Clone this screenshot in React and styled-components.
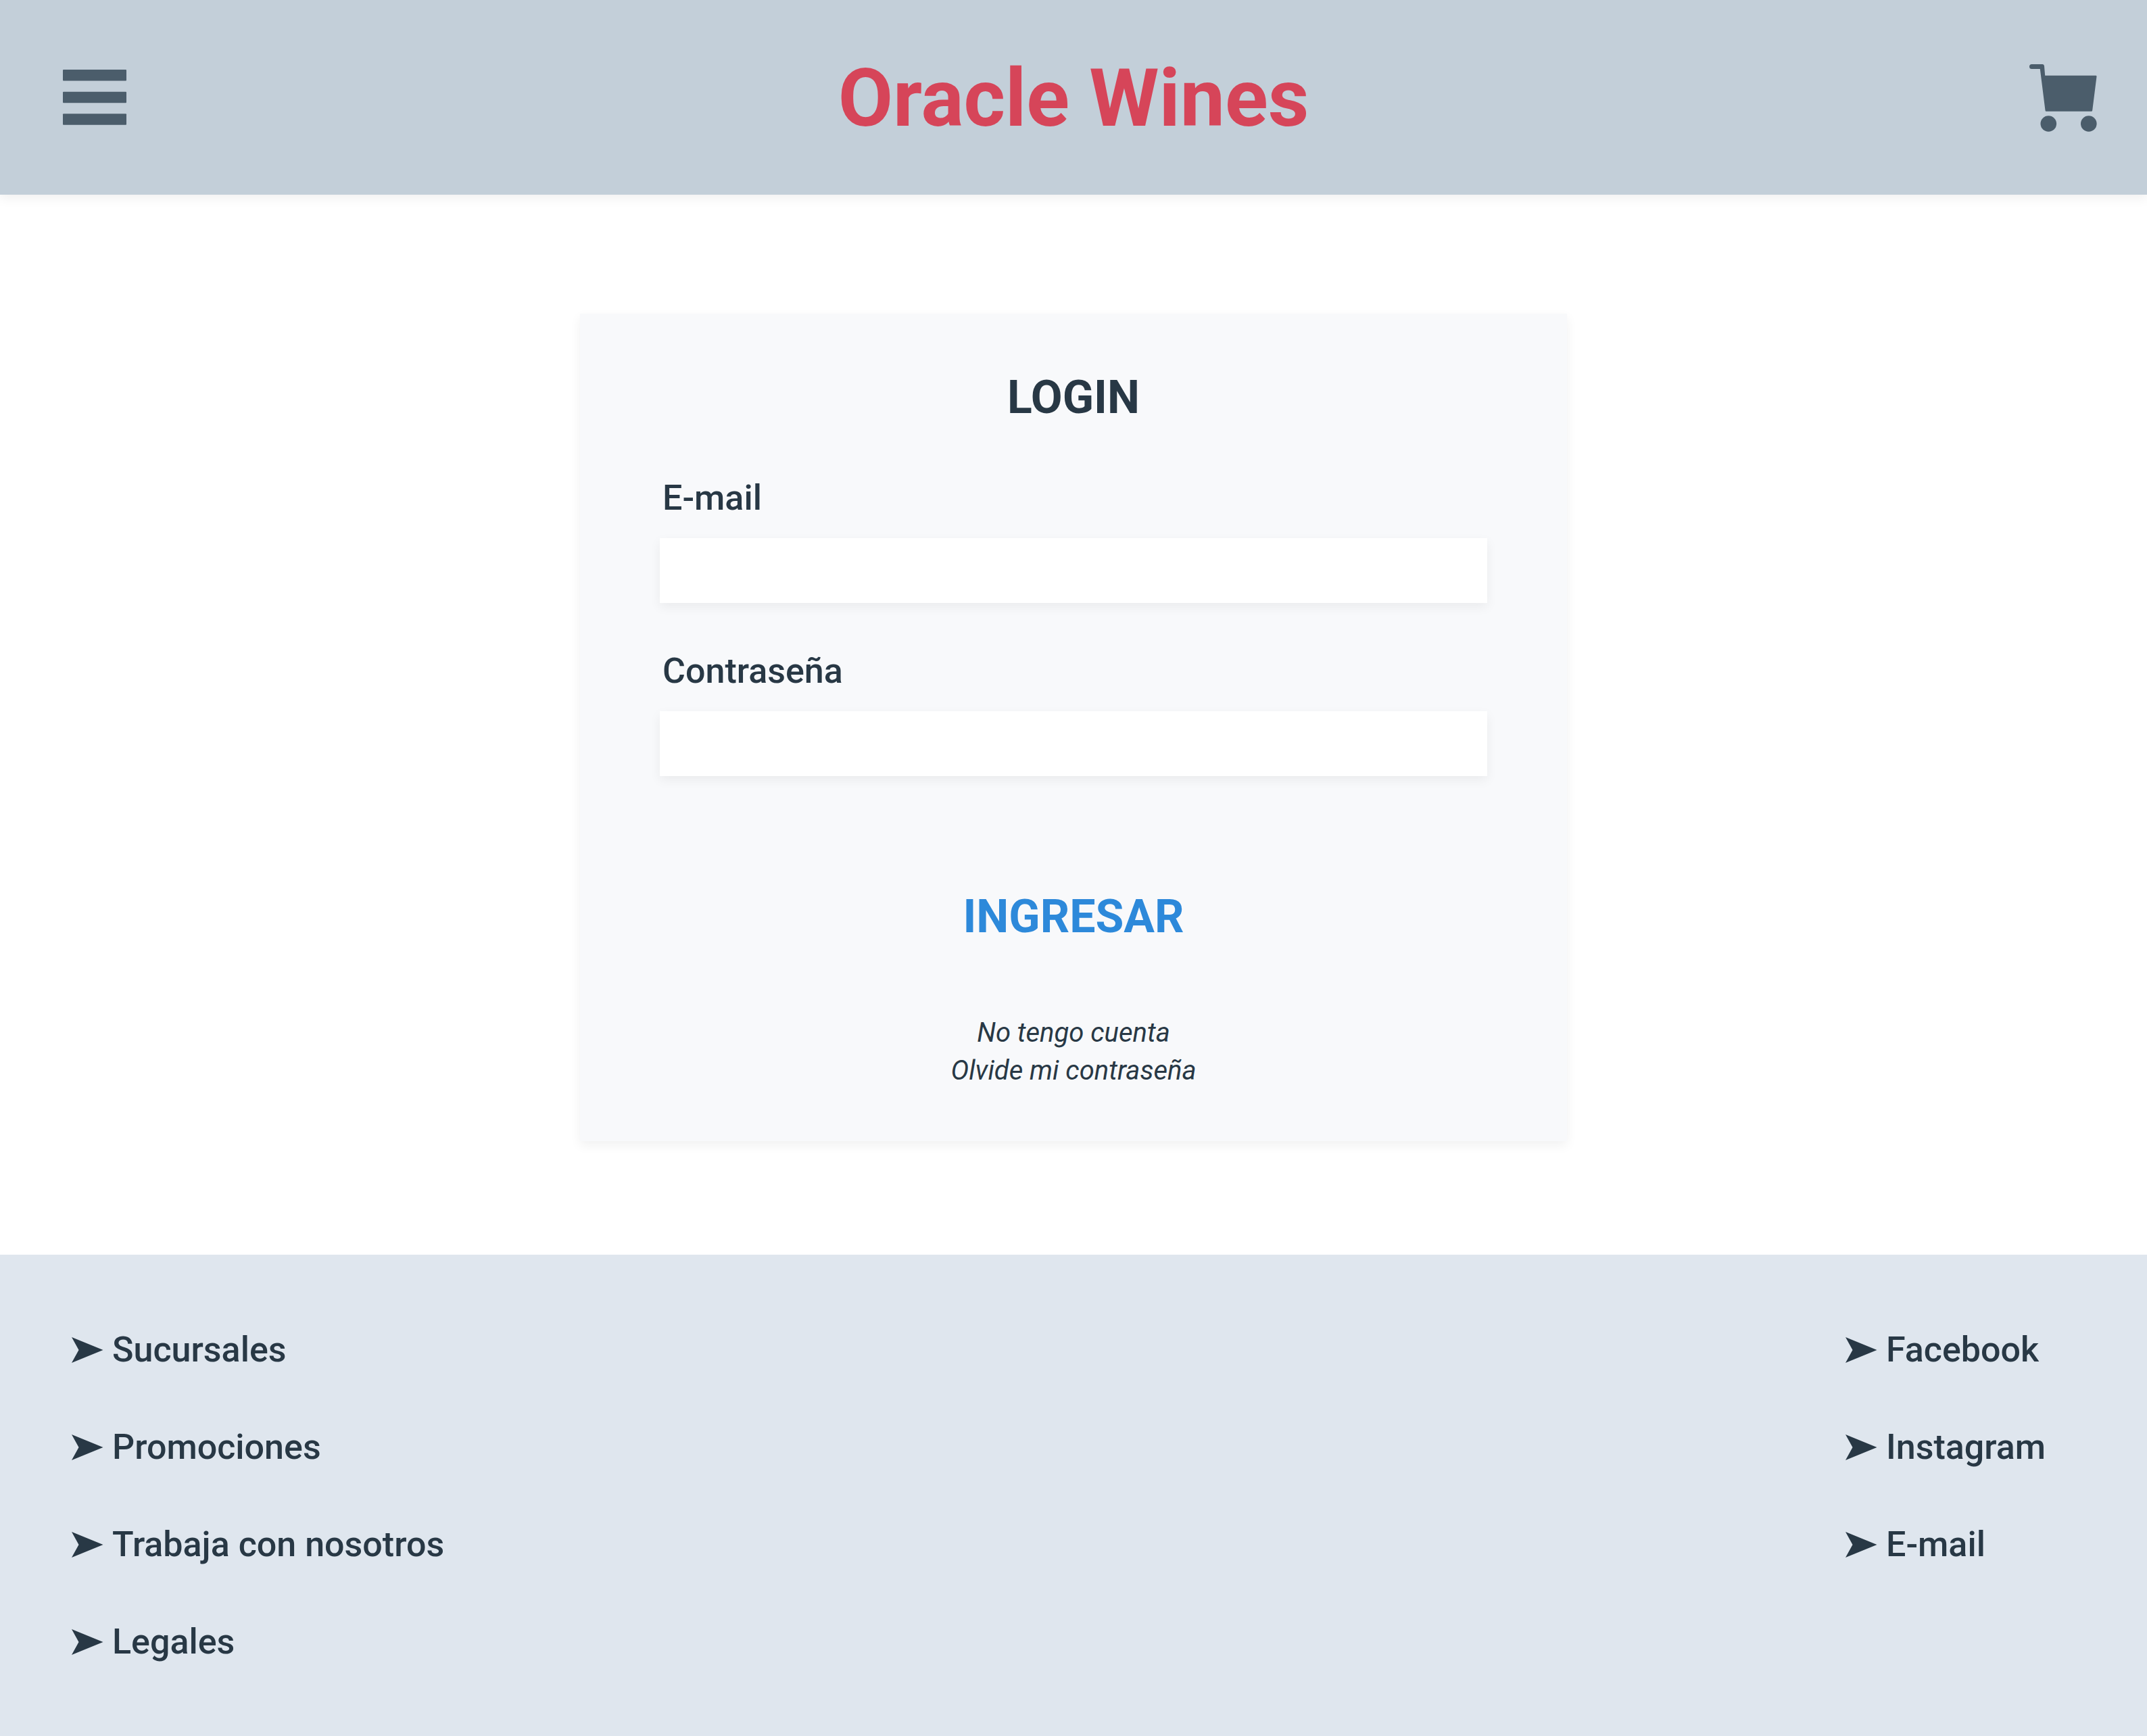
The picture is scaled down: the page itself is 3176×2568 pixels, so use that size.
import React from "react";
import styled, { createGlobalStyle } from "styled-components";

const color = {
  bar: "#c3cfd9",
  brand: "#d64559",
  icon: "#4b5d6b",
  text: "#283845",
  action: "#2d89da",
  card: "#f8f9fb",
  footer: "#dfe6ee",
};

const shadow = "0 6px 16px rgba(0, 0, 0, 0.06)";

const GlobalStyle = createGlobalStyle`
  *, *::before, *::after { box-sizing: border-box; }
  body {
    margin: 0;
    background: #fff;
    color: ${color.text};
    font-family: Roboto, "Liberation Sans", sans-serif;
    font-size: 52px;
    font-weight: 500;
    line-height: 66px;
  }
`;

const Page = styled.div`
  display: flex;
  flex-direction: column;
  min-height: 100vh;
`;

const Header = styled.header`
  display: grid;
  grid-template-columns: 1fr auto 1fr;
  align-items: center;
  height: 288px;
  background: ${color.bar};
  box-shadow: ${shadow};
`;

const IconButton = styled.button`
  display: flex;
  justify-self: ${({ $side }) => $side};
  margin: 0 74px 0 92px;
  padding: 0;
  border: 0;
  background: none;
  color: ${color.icon};
  cursor: pointer;
`;

const Brand = styled.h1`
  margin: 0;
  padding-top: 4px;
  color: ${color.brand};
  font-size: 118px;
  font-weight: 700;
  line-height: 136px;
`;

const Main = styled.main`
  display: flex;
  flex: 1;
  justify-content: center;
  align-items: flex-start;
  padding: 176px 40px 168px;
`;

const Card = styled.form`
  display: flex;
  flex-direction: column;
  width: 100%;
  max-width: 1460px;
  padding: 82px 118px 76px;
  background: ${color.card};
  box-shadow: ${shadow};
`;

const CardTitle = styled.h2`
  margin: 0 0 74px;
  font-size: 68px;
  font-weight: 700;
  line-height: 84px;
  text-align: center;
`;

const Fields = styled.div`
  display: flex;
  flex-direction: column;
  gap: 68px;
`;

const Field = styled.div`
  display: flex;
  flex-direction: column;
  gap: 26px;
`;

const Label = styled.label`
  padding-left: 4px;
`;

const TextBox = styled.input`
  width: 100%;
  height: 96px;
  padding: 0 24px;
  border: 0;
  border-radius: 0;
  background: #fff;
  box-shadow: ${shadow};
  color: inherit;
  font: inherit;
`;

const Submit = styled.button`
  align-self: center;
  margin: 166px 0 102px;
  padding: 0;
  border: 0;
  background: none;
  color: ${color.action};
  font-family: inherit;
  font-size: 68px;
  font-weight: 700;
  line-height: 84px;
  cursor: pointer;
`;

const HelpLinks = styled.nav`
  display: flex;
  flex-direction: column;
  align-items: center;
`;

const HelpLink = styled.a`
  color: inherit;
  font-size: 40px;
  font-style: italic;
  font-weight: 400;
  line-height: 56px;
  text-decoration: none;
`;

const Footer = styled.footer`
  display: grid;
  grid-template-columns: 1fr 340px;
  padding: 108px 106px 106px;
  background: ${color.footer};
`;

const LinkList = styled.ul`
  display: flex;
  flex-direction: column;
  gap: 78px;
  margin: 0;
  padding: 0;
  list-style: none;
`;

const FooterLink = styled.a`
  display: flex;
  align-items: center;
  gap: 12px;
  color: inherit;
  text-decoration: none;
`;

function MenuIcon() {
  return (
    <svg width="96" height="82" viewBox="0 0 96 82" fill="currentColor" aria-hidden="true">
      <rect x="1" y="0" width="94" height="16.5" rx="1" />
      <rect x="1" y="32.7" width="94" height="16.5" rx="1" />
      <rect x="1" y="65.3" width="94" height="16.5" rx="1" />
    </svg>
  );
}

function CartIcon() {
  return (
    <svg width="100" height="100" viewBox="0 0 100 100" fill="currentColor" overflow="visible" aria-hidden="true">
      <g transform="translate(0 1)">
        <path d="M3.5 0H19.5Q21.8 0 22 2.5L23.2 16.7H98.3Q99.6 16.7 99.5 18.2L93.2 68.2Q93 69.7 91.7 69.7H25Q23.7 69.7 23.5 68.2L15.8 7H3.5A3.5 3.5 0 0 1 3.5 0Z" />
        <circle cx="28.3" cy="88" r="11.8" />
        <circle cx="87.8" cy="88" r="11.8" />
      </g>
    </svg>
  );
}

function ArrowIcon() {
  return (
    <svg width="48" height="38" viewBox="0 0 48 38" fill="currentColor" aria-hidden="true">
      <path d="M0 0L46.5 19L0 38L10.5 19Z" />
    </svg>
  );
}

function FooterLinks({ items }) {
  return (
    <LinkList>
      {items.map((item) => (
        <li key={item}>
          <FooterLink href="#">
            <ArrowIcon />
            {item}
          </FooterLink>
        </li>
      ))}
    </LinkList>
  );
}

export default function App() {
  return (
    <Page>
      <GlobalStyle />
      <Header>
        <IconButton type="button" $side="start" aria-label="Menú">
          <MenuIcon />
        </IconButton>
        <Brand>Oracle Wines</Brand>
        <IconButton type="button" $side="end" aria-label="Carrito">
          <CartIcon />
        </IconButton>
      </Header>
      <Main>
        <Card onSubmit={(event) => event.preventDefault()}>
          <CardTitle>LOGIN</CardTitle>
          <Fields>
            <Field>
              <Label htmlFor="email">E-mail</Label>
              <TextBox id="email" type="email" autoComplete="email" />
            </Field>
            <Field>
              <Label htmlFor="password">Contraseña</Label>
              <TextBox id="password" type="password" autoComplete="current-password" />
            </Field>
          </Fields>
          <Submit type="submit">INGRESAR</Submit>
          <HelpLinks>
            <HelpLink href="#">No tengo cuenta</HelpLink>
            <HelpLink href="#">Olvide mi contraseña</HelpLink>
          </HelpLinks>
        </Card>
      </Main>
      <Footer>
        <FooterLinks items={["Sucursales", "Promociones", "Trabaja con nosotros", "Legales"]} />
        <FooterLinks items={["Facebook", "Instagram", "E-mail"]} />
      </Footer>
    </Page>
  );
}
